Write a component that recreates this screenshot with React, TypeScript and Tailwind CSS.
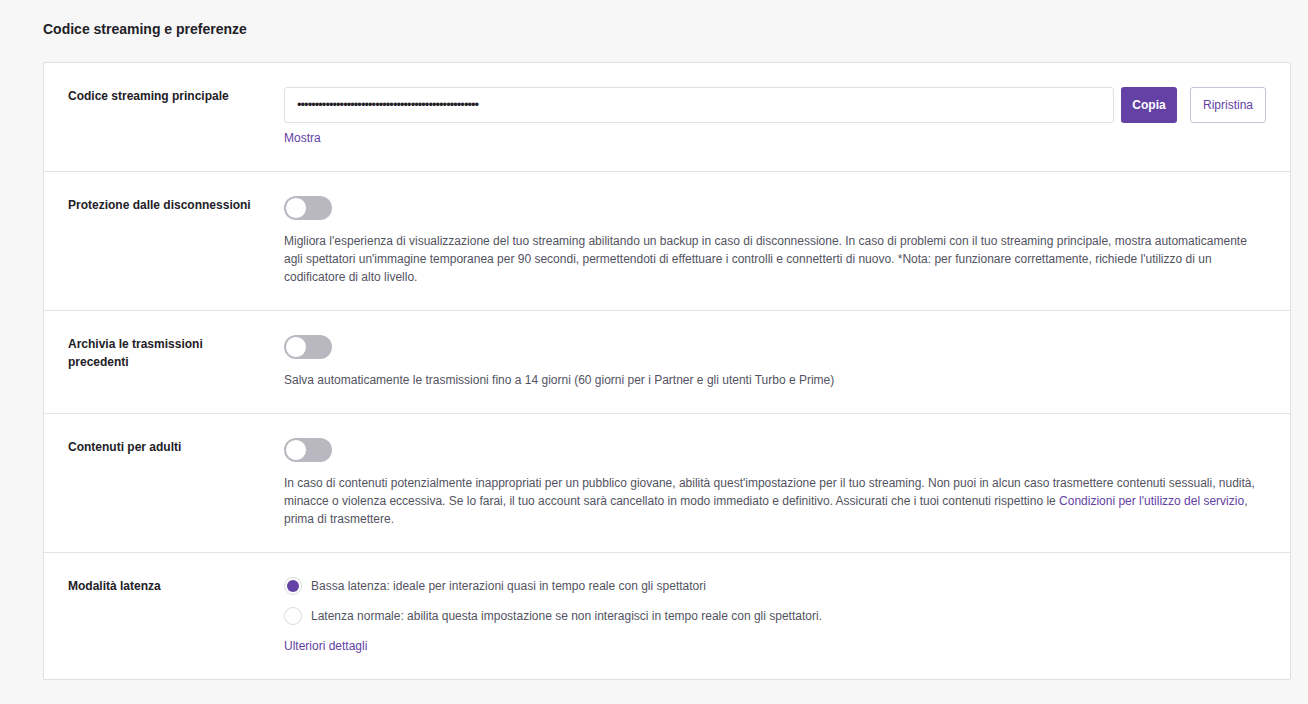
import React from "react";

function Toggle() {
  return (
    <div className="relative h-[24px] w-[48px] rounded-full bg-[#b9b8c0]">
      <div className="absolute left-[1px] top-[1px] h-[22px] w-[22px] rounded-full border border-[#b9b8c0] bg-white" />
    </div>
  );
}

function Row({ label, children, last }: { label: React.ReactNode; children: React.ReactNode; last?: boolean }) {
  return (
    <div className={"flex px-[24px] pt-[24px] pb-[24px]" + (last ? "" : " border-b border-[#e4e4e7]")}>
      <div className="w-[216px] shrink-0 pr-4 text-[12px] font-bold leading-[18px] text-[#232127]">{label}</div>
      <div className="min-w-0 flex-1">{children}</div>
    </div>
  );
}

function Radio({ checked, children }: { checked?: boolean; children: React.ReactNode }) {
  return (
    <div className="flex items-center gap-[9px]">
      <div className="flex h-[18px] w-[18px] items-center justify-center rounded-full border border-[#dcdce0] bg-white">
        {checked && <div className="h-[12px] w-[12px] rounded-full bg-[#6441a5]" />}
      </div>
      <span className="text-[12px] leading-[18px] text-[#53535f]">{children}</span>
    </div>
  );
}

export default function App() {
  return (
    <div className="min-h-[704px] bg-[#f7f7f8] pl-[43px] pr-[17px] pt-[20px] pb-[24px] font-['Liberation_Sans',Arial,sans-serif]">
      <h2 className="mb-[24px] text-[14px] font-bold leading-[18px] text-[#232127]">Codice streaming e preferenze</h2>
      <div className="rounded-[2px] border border-[#dedee3] bg-white">
        <Row label="Codice streaming principale">
          <div className="flex items-center">
            <div className="flex h-[36px] flex-1 items-center rounded-[3px] border border-[#dedee3] px-[12px] text-[13px] tracking-[-1px] text-[#232127]">
              {"•".repeat(51)}
            </div>
            <button className="ml-[7px] h-[36px] w-[56px] rounded-[3px] bg-[#6441a5] text-[12px] font-bold text-white">Copia</button>
            <button className="ml-[13px] h-[36px] w-[76px] rounded-[3px] border border-[#c7c2d6] bg-white text-[12px] text-[#6441a5]">Ripristina</button>
          </div>
          <div className="mt-[6px] text-[12px] leading-[18px] text-[#6441a5]">Mostra</div>
        </Row>
        <Row label="Protezione dalle disconnessioni">
          <Toggle />
          <p className="mt-[12px] text-[12px] leading-[18px] text-[#53535f]">
            Migliora l'esperienza di visualizzazione del tuo streaming abilitando un backup in caso di disconnessione. In caso di problemi con il tuo streaming principale, mostra automaticamente agli spettatori un'immagine temporanea per 90 secondi, permettendoti di effettuare i controlli e connetterti di nuovo. *Nota: per funzionare correttamente, richiede l'utilizzo di un codificatore di alto livello.
          </p>
        </Row>
        <Row label={<>Archivia le trasmissioni<br />precedenti</>}>
          <Toggle />
          <p className="mt-[12px] text-[12px] leading-[18px] text-[#53535f]">
            Salva automaticamente le trasmissioni fino a 14 giorni (60 giorni per i Partner e gli utenti Turbo e Prime)
          </p>
        </Row>
        <Row label="Contenuti per adulti">
          <Toggle />
          <p className="mt-[12px] text-[12px] leading-[18px] text-[#53535f]">
            In caso di contenuti potenzialmente inappropriati per un pubblico giovane, abilità quest'impostazione per il tuo streaming. Non puoi in alcun caso trasmettere contenuti sessuali, nudità, minacce o violenza eccessiva. Se lo farai, il tuo account sarà cancellato in modo immediato e definitivo. Assicurati che i tuoi contenuti rispettino le <span className="text-[#6441a5]">Condizioni per l'utilizzo del servizio</span>, prima di trasmettere.
          </p>
        </Row>
        <Row label="Modalità latenza" last>
          <div className="flex flex-col gap-[12px]">
            <Radio checked>Bassa latenza: ideale per interazioni quasi in tempo reale con gli spettatori</Radio>
            <Radio>Latenza normale: abilita questa impostazione se non interagisci in tempo reale con gli spettatori.</Radio>
          </div>
          <div className="mt-[12px] text-[12px] leading-[18px] text-[#6441a5]">Ulteriori dettagli</div>
        </Row>
      </div>
    </div>
  );
}
